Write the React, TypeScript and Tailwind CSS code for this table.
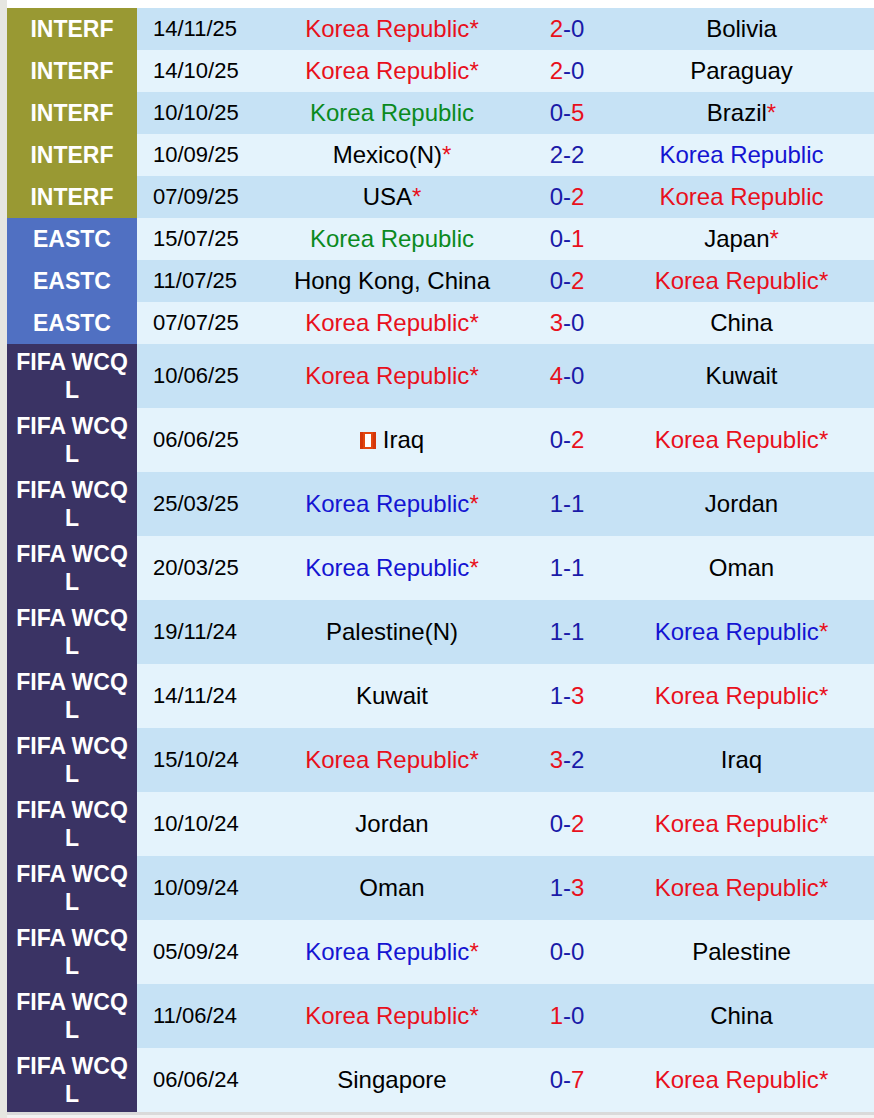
import * as React from 'react'

type Comp = 'INTERF' | 'EASTC' | 'FIFA'
type Tone = 'red' | 'green' | 'blue' | 'black'

interface Side {
  name: string
  tone: Tone
  star?: boolean
  flag?: boolean
}

interface Match {
  comp: Comp
  date: string
  home: Side
  score: [number, number]
  away: Side
}

const KR = 'Korea Republic'

const matches: Match[] = [
  { comp: 'INTERF', date: '14/11/25', home: { name: KR, tone: 'red', star: true }, score: [2, 0], away: { name: 'Bolivia', tone: 'black' } },
  { comp: 'INTERF', date: '14/10/25', home: { name: KR, tone: 'red', star: true }, score: [2, 0], away: { name: 'Paraguay', tone: 'black' } },
  { comp: 'INTERF', date: '10/10/25', home: { name: KR, tone: 'green' }, score: [0, 5], away: { name: 'Brazil', tone: 'black', star: true } },
  { comp: 'INTERF', date: '10/09/25', home: { name: 'Mexico(N)', tone: 'black', star: true }, score: [2, 2], away: { name: KR, tone: 'blue' } },
  { comp: 'INTERF', date: '07/09/25', home: { name: 'USA', tone: 'black', star: true }, score: [0, 2], away: { name: KR, tone: 'red' } },
  { comp: 'EASTC', date: '15/07/25', home: { name: KR, tone: 'green' }, score: [0, 1], away: { name: 'Japan', tone: 'black', star: true } },
  { comp: 'EASTC', date: '11/07/25', home: { name: 'Hong Kong, China', tone: 'black' }, score: [0, 2], away: { name: KR, tone: 'red', star: true } },
  { comp: 'EASTC', date: '07/07/25', home: { name: KR, tone: 'red', star: true }, score: [3, 0], away: { name: 'China', tone: 'black' } },
  { comp: 'FIFA', date: '10/06/25', home: { name: KR, tone: 'red', star: true }, score: [4, 0], away: { name: 'Kuwait', tone: 'black' } },
  { comp: 'FIFA', date: '06/06/25', home: { name: 'Iraq', tone: 'black', flag: true }, score: [0, 2], away: { name: KR, tone: 'red', star: true } },
  { comp: 'FIFA', date: '25/03/25', home: { name: KR, tone: 'blue', star: true }, score: [1, 1], away: { name: 'Jordan', tone: 'black' } },
  { comp: 'FIFA', date: '20/03/25', home: { name: KR, tone: 'blue', star: true }, score: [1, 1], away: { name: 'Oman', tone: 'black' } },
  { comp: 'FIFA', date: '19/11/24', home: { name: 'Palestine(N)', tone: 'black' }, score: [1, 1], away: { name: KR, tone: 'blue', star: true } },
  { comp: 'FIFA', date: '14/11/24', home: { name: 'Kuwait', tone: 'black' }, score: [1, 3], away: { name: KR, tone: 'red', star: true } },
  { comp: 'FIFA', date: '15/10/24', home: { name: KR, tone: 'red', star: true }, score: [3, 2], away: { name: 'Iraq', tone: 'black' } },
  { comp: 'FIFA', date: '10/10/24', home: { name: 'Jordan', tone: 'black' }, score: [0, 2], away: { name: KR, tone: 'red', star: true } },
  { comp: 'FIFA', date: '10/09/24', home: { name: 'Oman', tone: 'black' }, score: [1, 3], away: { name: KR, tone: 'red', star: true } },
  { comp: 'FIFA', date: '05/09/24', home: { name: KR, tone: 'blue', star: true }, score: [0, 0], away: { name: 'Palestine', tone: 'black' } },
  { comp: 'FIFA', date: '11/06/24', home: { name: KR, tone: 'red', star: true }, score: [1, 0], away: { name: 'China', tone: 'black' } },
  { comp: 'FIFA', date: '06/06/24', home: { name: 'Singapore', tone: 'black' }, score: [0, 7], away: { name: KR, tone: 'red', star: true } },
]

const toneClass: Record<Tone, string> = {
  red: 'text-[#e8101c]',
  green: 'text-[#0a8a1e]',
  blue: 'text-[#1414d2]',
  black: 'text-black',
}

const compClass: Record<Comp, string> = {
  INTERF: 'bg-[#999933]',
  EASTC: 'bg-[#5070c2]',
  FIFA: 'bg-[#3a3364]',
}

// little Iraq flag thumbnail next to the team name
function IraqFlag() {
  return (
    <svg width="16" height="17" viewBox="0 0 16 17" className="mr-[7px] shrink-0">
      <rect width="16" height="17" fill="#e2460e" />
      <rect x="5" y="2" width="6" height="13" fill="#ffffff" />
      <rect x="0" y="0" width="3" height="17" fill="#d5360a" />
      <rect x="13" y="0" width="3" height="17" fill="#d5360a" />
    </svg>
  )
}

function Team({ side }: { side: Side }) {
  return (
    <span className={`flex items-center justify-center ${toneClass[side.tone]}`}>
      {side.flag && <IraqFlag />}
      <span>{side.name}</span>
      {side.star && <span className="text-[#e8101c]">*</span>}
    </span>
  )
}

function Score({ score }: { score: [number, number] }) {
  const [h, a] = score
  return (
    <span>
      <span className={h > a ? 'text-[#e8101c]' : 'text-[#1a1aa8]'}>{h}</span>
      <span className="text-[#1a1aa8]">-</span>
      <span className={a > h ? 'text-[#e8101c]' : 'text-[#1a1aa8]'}>{a}</span>
    </span>
  )
}

export default function App() {
  return (
    <div
      className="flex min-h-[1118px] w-[874px] bg-white text-[24px] leading-[28px]"
      style={{ fontFamily: '"Liberation Sans", Arial, sans-serif' }}
    >
      <div className="w-[7px] shrink-0 bg-[#e6e6e1]" />
      <div className="flex flex-1 flex-col pt-[8px]">
        <div className="flex flex-col border-b-[3px] border-[#dadada]">
          {matches.map((m, i) => (
            <div
              key={i}
              className={`flex items-stretch ${m.comp === 'FIFA' ? 'h-[64px]' : 'h-[42px]'} ${i % 2 === 0 ? 'bg-[#c6e2f5]' : 'bg-[#e4f3fc]'}`}
            >
              <div className={`flex w-[130px] shrink-0 flex-col items-center justify-center text-center text-[23px] font-bold text-white ${compClass[m.comp]}`}>
                {m.comp === 'FIFA' ? (
                  <>
                    <span>FIFA WCQ</span>
                    <span>L</span>
                  </>
                ) : (
                  <span>{m.comp}</span>
                )}
              </div>
              <div className="flex w-[130px] shrink-0 items-center pl-[16px] text-[22px] text-black">{m.date}</div>
              <div className="flex w-[250px] shrink-0 items-center justify-center">
                <Team side={m.home} />
              </div>
              <div className="flex w-[100px] shrink-0 items-center justify-center">
                <Score score={m.score} />
              </div>
              <div className="flex w-[249px] shrink-0 items-center justify-center">
                <Team side={m.away} />
              </div>
            </div>
          ))}
        </div>
        <div className="flex-1 bg-[#f2f2f2]" />
      </div>
    </div>
  )
}
